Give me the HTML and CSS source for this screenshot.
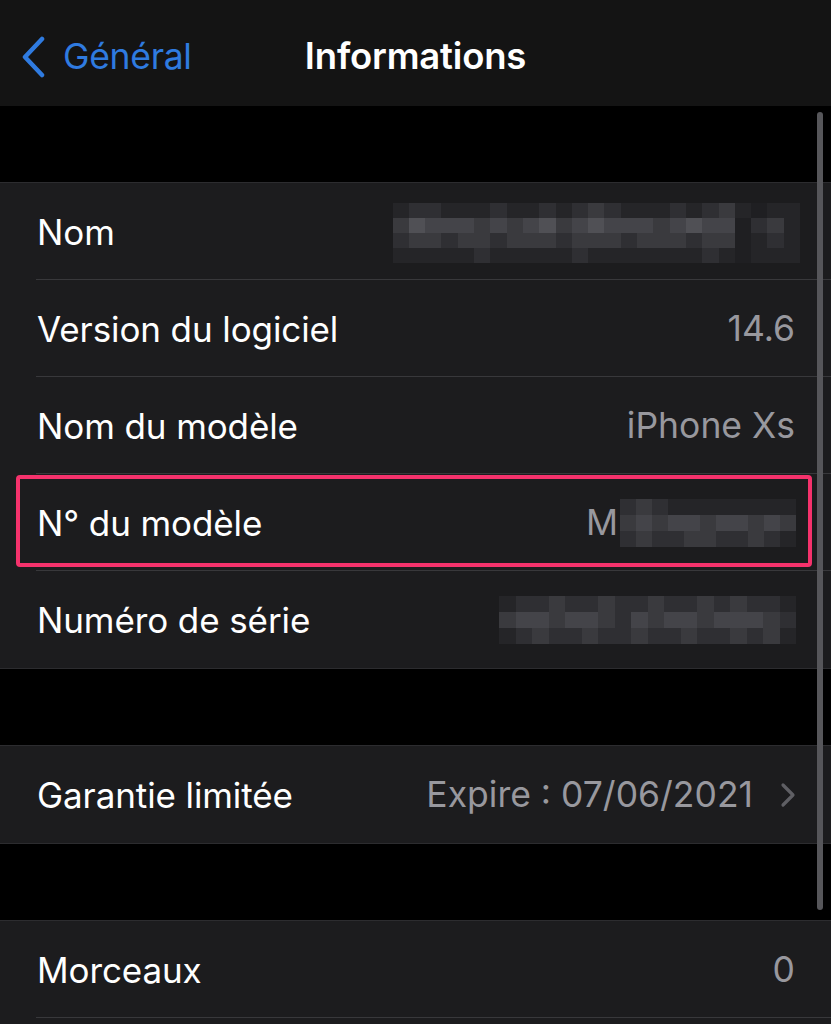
FILE: index.html
```html
<!DOCTYPE html>
<html lang="fr">
<head>
<meta charset="utf-8">
<title>Informations</title>
<link rel="stylesheet" href="styles.css">
</head>
<body>
<div class="screen">
  <header class="nav">
    <div class="back">
      <svg class="chev-back" width="26" height="42" viewBox="0 0 26 42"><path d="M22 3 L5 21 L22 39" fill="none" stroke="#2f7be0" stroke-width="4.5" stroke-linecap="round" stroke-linejoin="round"/></svg>
      <span>Général</span>
    </div>
    <h1 class="title">Informations</h1>
  </header>

  <div class="gap"></div>

  <section class="group">
    <div class="row">
      <span class="label">Nom</span>
      <div class="mosaic m-name">
        <span class="a"></span><span class="b"></span><span class="b"></span><span class="a"></span><span class="a"></span><span class="a"></span><span class="b"></span><span class="a"></span><span class="a"></span><span class="b"></span><span class="a"></span><span class="b"></span><span class="c"></span><span class="b"></span><span class="a"></span><span class="a"></span><span class="a"></span><span class="b"></span><span class="a"></span><span class="b"></span><span class="c"></span><span class="a"></span><span class="z"></span><span class="a"></span><span class="a"></span>
        <span class="c"></span><span class="e"></span><span class="d"></span><span class="d"></span><span class="d"></span><span class="c"></span><span class="d"></span><span class="c"></span><span class="d"></span><span class="e"></span><span class="c"></span><span class="d"></span><span class="e"></span><span class="d"></span><span class="d"></span><span class="d"></span><span class="c"></span><span class="d"></span><span class="e"></span><span class="d"></span><span class="d"></span><span class="z"></span><span class="b"></span><span class="c"></span><span class="a"></span>
        <span class="b"></span><span class="c"></span><span class="c"></span><span class="b"></span><span class="c"></span><span class="c"></span><span class="b"></span><span class="c"></span><span class="c"></span><span class="c"></span><span class="b"></span><span class="c"></span><span class="c"></span><span class="c"></span><span class="b"></span><span class="c"></span><span class="c"></span><span class="c"></span><span class="b"></span><span class="c"></span><span class="c"></span><span class="z"></span><span class="a"></span><span class="b"></span><span class="a"></span>
        <span class="a"></span><span class="a"></span><span class="a"></span><span class="a"></span><span class="a"></span><span class="b"></span><span class="a"></span><span class="a"></span><span class="a"></span><span class="a"></span><span class="a"></span><span class="b"></span><span class="a"></span><span class="a"></span><span class="a"></span><span class="a"></span><span class="a"></span><span class="a"></span><span class="a"></span><span class="b"></span><span class="a"></span><span class="z"></span><span class="a"></span><span class="a"></span><span class="a"></span>
      </div>
    </div>
    <div class="row">
      <span class="label">Version du logiciel</span>
      <span class="value">14.6</span>
    </div>
    <div class="row">
      <span class="label">Nom du modèle</span>
      <span class="value">iPhone Xs</span>
    </div>
    <div class="row highlighted">
      <span class="label">N° du modèle</span>
      <div class="value-wrap">
        <span class="value">M</span>
        <div class="mosaic m-model">
          <span class="b"></span><span class="c"></span><span class="b"></span><span class="a"></span><span class="a"></span><span class="a"></span><span class="a"></span><span class="a"></span><span class="a"></span><span class="a"></span><span class="a"></span>
          <span class="c"></span><span class="d"></span><span class="c"></span><span class="d"></span><span class="d"></span><span class="c"></span><span class="d"></span><span class="d"></span><span class="c"></span><span class="d"></span><span class="c"></span>
          <span class="b"></span><span class="c"></span><span class="b"></span><span class="b"></span><span class="c"></span><span class="c"></span><span class="b"></span><span class="b"></span><span class="c"></span><span class="b"></span><span class="a"></span>
        </div>
      </div>
    </div>
    <div class="row last">
      <span class="label">Numéro de série</span>
      <div class="mosaic m-serial">
        <span class="a"></span><span class="b"></span><span class="b"></span><span class="c"></span><span class="b"></span><span class="b"></span><span class="c"></span><span class="b"></span><span class="b"></span><span class="c"></span><span class="b"></span><span class="b"></span><span class="c"></span><span class="b"></span><span class="c"></span><span class="b"></span><span class="b"></span><span class="a"></span>
        <span class="c"></span><span class="d"></span><span class="d"></span><span class="c"></span><span class="d"></span><span class="d"></span><span class="c"></span><span class="b"></span><span class="d"></span><span class="c"></span><span class="d"></span><span class="d"></span><span class="c"></span><span class="d"></span><span class="d"></span><span class="d"></span><span class="c"></span><span class="b"></span>
        <span class="a"></span><span class="b"></span><span class="c"></span><span class="b"></span><span class="b"></span><span class="c"></span><span class="b"></span><span class="b"></span><span class="c"></span><span class="b"></span><span class="b"></span><span class="c"></span><span class="b"></span><span class="b"></span><span class="c"></span><span class="b"></span><span class="c"></span><span class="a"></span>
      </div>
    </div>
  </section>

  <div class="gap"></div>

  <section class="group">
    <div class="row last">
      <span class="label">Garantie limitée</span>
      <div class="value-wrap">
        <span class="value">Expire : 07/06/2021</span>
        <svg class="chev" width="16" height="26" viewBox="0 0 16 26"><path d="M3 3 L13 13 L3 23" fill="none" stroke="#5f5f64" stroke-width="3.2" stroke-linecap="round" stroke-linejoin="round"/></svg>
      </div>
    </div>
  </section>

  <div class="gap"></div>

  <section class="group">
    <div class="row">
      <span class="label">Morceaux</span>
      <span class="value">0</span>
    </div>
    <div class="row"></div>
  </section>

  <div class="scroll-indicator"></div>
</div>
</body>
</html>
```

FILE: styles.css
```css
* { box-sizing: border-box; }

html, body {
  margin: 0;
  padding: 0;
  background: #000;
}

body {
  width: 831px;
  height: 1024px;
  overflow: hidden;
  font-family: "Inter", "Liberation Sans", sans-serif;
  -webkit-font-smoothing: antialiased;
}

.screen {
  position: relative;
  width: 831px;
  height: 1024px;
  overflow: hidden;
  background: #000;
}

.nav {
  position: relative;
  height: 106px;
  background: #141414;
  display: flex;
  align-items: center;
  justify-content: center;
  padding-top: 6px;
}

.back {
  position: absolute;
  left: 20px;
  top: 35px;
  display: flex;
  align-items: center;
  gap: 17px;
  color: #2f7be0;
  font-size: 35.5px;
  letter-spacing: -0.3px;
}

.chev-back { display: block; }

.title {
  margin: 0;
  color: #fff;
  font-size: 36.5px;
  font-weight: 600;
  letter-spacing: -0.2px;
}

.gap {
  height: 76px;
  background: #000;
}

.group {
  background: #1c1c1e;
  border-top: 1px solid #2c2c2f;
  border-bottom: 1px solid #2c2c2f;
}

.row {
  position: relative;
  height: 97px;
  display: flex;
  align-items: center;
  justify-content: space-between;
  padding: 0 36px 0 37px;
}

.row::after {
  content: "";
  position: absolute;
  left: 36px;
  right: 0;
  bottom: 0;
  height: 1px;
  background: #38383b;
}

.row.last::after { display: none; }

.label {
  color: #fff;
  font-size: 35px;
  letter-spacing: -0.1px;
}

.value {
  color: #98989e;
  font-size: 35.5px;
  letter-spacing: 0;
}

.value-wrap {
  display: flex;
  align-items: center;
}

.chev {
  display: block;
  margin-left: 27px;
  margin-right: -1px;
}

.highlighted::before {
  content: "";
  position: absolute;
  left: 16px;
  right: 19px;
  top: 1px;
  bottom: 4px;
  border: 4px solid #f5326c;
  border-radius: 4px;
  z-index: 2;
}

/* pixelated (masked) values */
.mosaic {
  display: grid;
  grid-auto-rows: 15px;
}

.mosaic span { display: block; }

.mosaic .z { background: #1f1f22; }
.mosaic .a { background: #252528; }
.mosaic .b { background: #2f2f33; }
.mosaic .c { background: #3a3a3e; }
.mosaic .d { background: #444449; }
.mosaic .e { background: #505055; }

.m-name {
  grid-template-columns: repeat(25, 16.3px);
  margin-right: -5px;
  margin-top: 2px;
}

.m-model {
  grid-template-columns: repeat(11, 16px);
  grid-auto-rows: 16px;
  margin-left: 2px;
  margin-right: -1px;
}

.m-serial {
  grid-template-columns: repeat(18, 16.5px);
  grid-auto-rows: 16px;
  margin-right: -1px;
}

.scroll-indicator {
  position: absolute;
  left: 817px;
  top: 112px;
  width: 6px;
  height: 798px;
  border-radius: 3px;
  background: #56565a;
  z-index: 3;
}
```
